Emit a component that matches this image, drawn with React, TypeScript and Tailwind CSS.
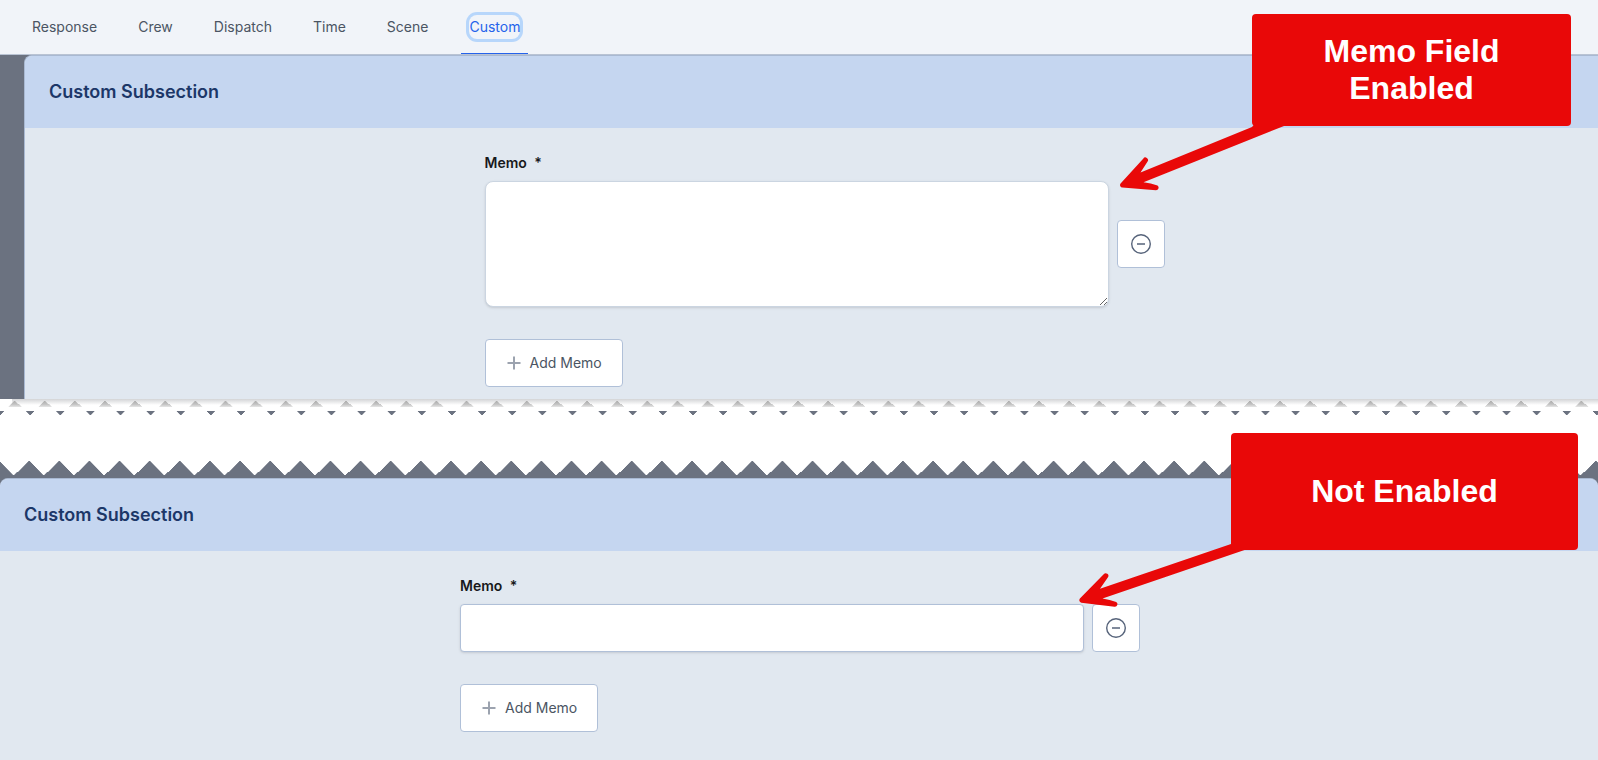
import React from "react";

const tabs = ["Response", "Crew", "Dispatch", "Time", "Scene", "Custom"];

function TabBar() {
  return (
    <nav className="flex h-[55px] shrink-0 items-stretch gap-[25px] border-b border-[#b9c3d3] bg-[#f1f4f9] pl-6" role="tablist">
      {tabs.map((tab) => {
        const active = tab === "Custom";
        return (
          <button
            key={tab}
            type="button"
            role="tab"
            aria-selected={active}
            className={
              active
                ? "flex items-center border-b border-[#2563eb] px-2 text-sm text-[#2563eb]"
                : "flex items-center border-b border-transparent px-2 text-sm text-[#4b5563]"
            }
          >
            <span className={active ? "rounded-lg py-0.5 ring-3 ring-[#b7d6fb]" : "py-0.5"}>{tab}</span>
          </button>
        );
      })}
    </nav>
  );
}

function MinusCircle() {
  return (
    <svg width="22" height="22" viewBox="0 0 22 22" fill="none" stroke="#56637a" aria-hidden="true">
      <circle cx="11" cy="11" r="9.3" strokeWidth="1.4" />
      <path d="M7 11h8" strokeWidth="1.5" />
    </svg>
  );
}

function PlusIcon() {
  return (
    <svg width="14" height="14" viewBox="0 0 14 14" stroke="#9ca3af" strokeWidth="2" aria-hidden="true">
      <path d="M7 .5v13M.5 7h13" />
    </svg>
  );
}

function MemoForm({ id, multiline = false }: { id: string; multiline?: boolean }) {
  return (
    <div className="mx-auto w-full max-w-[682px] pt-6 pl-0.5">
      <label htmlFor={id} className="block text-sm leading-[22px] font-semibold text-[#18181b]">
        Memo <span className="ml-1">*</span>
      </label>
      <div className="mt-[7px] flex items-center gap-2">
        {multiline ? (
          <textarea
            id={id}
            className="block h-[126px] min-w-0 flex-1 resize rounded-lg border border-[#cbd5e1] bg-white p-3 text-sm shadow-sm"
          />
        ) : (
          <input
            id={id}
            type="text"
            className="block h-12 min-w-0 flex-1 rounded border border-[#b0c0d8] bg-white px-3 text-sm shadow-sm"
          />
        )}
        <button
          type="button"
          aria-label="Remove memo"
          className="flex size-12 items-center justify-center rounded border border-[#b0c0d8] bg-white"
        >
          <MinusCircle />
        </button>
      </div>
      <button
        type="button"
        className="mt-8 flex h-12 items-center gap-[9px] rounded border border-[#b0c0d8] bg-white pr-5 pl-[21px] text-sm text-[#4b5563]"
      >
        <PlusIcon />
        Add Memo
      </button>
    </div>
  );
}

function SectionTitle() {
  return (
    <h2 className="flex h-[72px] items-center bg-[#c5d6f0] px-6 text-lg font-semibold text-[#1c3768]">
      Custom Subsection
    </h2>
  );
}

function TornStrip() {
  return (
    <svg className="block h-[79px] w-full shrink-0 bg-white" shapeRendering="crispEdges" aria-hidden="true">
      <defs>
        <linearGradient id="tear-shadow" x1="0" y1="0" x2="0" y2="1">
          <stop offset="0" stopColor="#d3d4d6" />
          <stop offset="1" stopColor="#ffffff" />
        </linearGradient>
        <linearGradient id="tear-tooth" x1="0" y1="0" x2="0" y2="1">
          <stop offset="0" stopColor="#a8a8a8" />
          <stop offset="0.6" stopColor="#c4c4c4" />
          <stop offset="1" stopColor="#e6e6e6" />
        </linearGradient>
        <pattern id="tear-top" width="30.13" height="20" patternUnits="userSpaceOnUse">
          <path d="M15 1.500l6.500 6.500h-13z" fill="url(#tear-tooth)" />
          <path d="M0 12h4.500l-4.500 4zM30.130 12h-4.500l4.500 4z" fill="#6b7280" />
        </pattern>
        <pattern id="tear-bottom" width="30.13" height="79" patternUnits="userSpaceOnUse">
          <path d="M0 62.600L13.500 76H14.500L28.600 62H29.600L30.130 62.600V79H0z" fill="#6b7280" />
        </pattern>
      </defs>
      <rect x="12" width="100%" height="6" fill="url(#tear-shadow)" />
      <rect width="100%" height="20" fill="url(#tear-top)" />
      <rect y="50" width="100%" height="29" fill="url(#tear-bottom)" />
    </svg>
  );
}

export default function App() {
  return (
    <div className="relative flex min-h-screen flex-col overflow-hidden bg-white font-['Inter',sans-serif]">
      <TabBar />
      <div className="shrink-0 bg-[#6b7280] pl-6">
        <section className="-mr-6 h-[344px] overflow-hidden rounded-tl-lg border-t border-l border-[#a9b9d2] bg-[#e1e8f0]">
          <SectionTitle />
          <MemoForm id="memo-long" multiline />
        </section>
      </div>
      <TornStrip />
      <div className="flex grow flex-col bg-[#6b7280]">
        <section className="grow overflow-hidden rounded-t-lg border-t border-[#a9b9d2] bg-[#e1e8f0] pb-7">
          <SectionTitle />
          <MemoForm id="memo-short" />
        </section>
      </div>

      <aside className="absolute top-[14px] right-[27px] font-['Liberation_Sans',sans-serif]">
        <svg className="absolute top-[104px] -left-[134px]" width="180" height="76" viewBox="1118 118 180 76" fill="#e90808" aria-hidden="true">
          <path d="M1252 127L1140.500 172.500L1147.600 161.500A2.600 2.600 0 0 0 1143.200 158.700L1120.800 183.200A2.600 2.600 0 0 0 1122.400 187.600L1156 190.300A2.600 2.600 0 0 0 1157.500 185.600Q1151 183.200 1143.500 182.300L1284 126L1284 120L1258 120Z" />
        </svg>
        <p className="relative flex h-28 w-[319px] items-center justify-center rounded bg-[#e90808] px-16 text-center text-[32px] leading-[37px] font-bold text-white">
          Memo Field Enabled
        </p>
      </aside>

      <aside className="absolute top-[433px] right-5 font-['Liberation_Sans',sans-serif]">
        <svg className="absolute top-[103px] -left-[154px]" width="190" height="78" viewBox="1077 536 190 78" fill="#e90808" aria-hidden="true">
          <path d="M1231 544L1100 588.800L1107.800 577.500A2.600 2.600 0 0 0 1103.700 574.300L1079.900 598.600A2.600 2.600 0 0 0 1081.300 602.800L1114.500 606.800A2.600 2.600 0 0 0 1116.200 602Q1110 599.500 1102.500 598.500L1246 549.500L1246 542Z" />
        </svg>
        <p className="relative flex h-[117px] w-[347px] items-center justify-center rounded bg-[#e90808] text-center text-[32px] leading-[37px] font-bold text-white">
          Not Enabled
        </p>
      </aside>
    </div>
  );
}
